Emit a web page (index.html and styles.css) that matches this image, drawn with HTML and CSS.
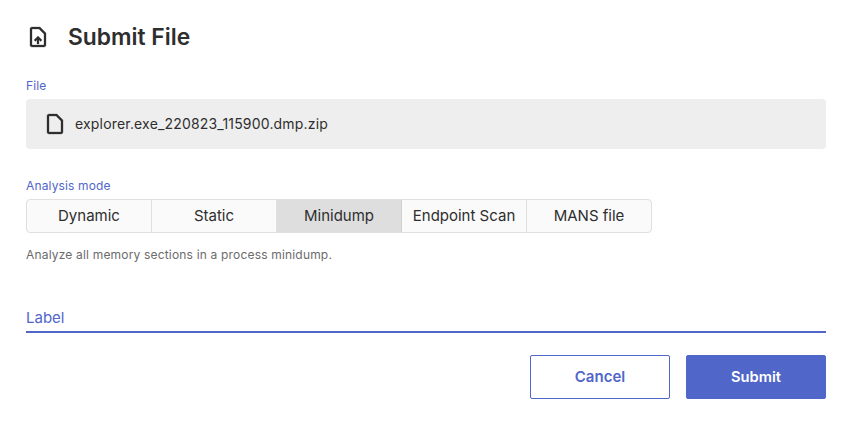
FILE: index.html
```html
<!DOCTYPE html>
<html lang="en">
<head>
<meta charset="utf-8">
<title>Submit File</title>
<link rel="stylesheet" href="styles.css">
</head>
<body>
<main class="dialog">
  <header class="title-row">
    <svg class="icon" viewBox="0 0 24 24"><path d="M14 2H6c-1.1 0-1.99.9-1.99 2L4 20c0 1.1.89 2 1.99 2H18c1.1 0 2-.9 2-2V8l-6-6zM6 20V4h7l5 5v11H6zM8 15.01l1.41 1.41L11 14.84V19h2v-4.16l1.59 1.59L16 15.01 12.01 11 8 15.01z"/></svg>
    <h1 class="title">Submit File</h1>
  </header>
  <section class="file-field">
    <div class="field-label">File</div>
    <div class="file-box">
      <svg class="icon" viewBox="0 0 24 24"><path d="M14 2H6c-1.1 0-1.99.9-1.99 2L4 20c0 1.1.89 2 1.99 2H18c1.1 0 2-.9 2-2V8l-6-6zM6 20V4h7l5 5v11H6z"/></svg>
      <span class="file-name">explorer.exe_220823_115900.dmp.zip</span>
    </div>
  </section>
  <section class="mode-field">
    <div class="field-label">Analysis mode</div>
    <div class="tabs">
      <div class="tab">Dynamic</div>
      <div class="tab">Static</div>
      <div class="tab active">Minidump</div>
      <div class="tab">Endpoint Scan</div>
      <div class="tab">MANS file</div>
    </div>
    <p class="help">Analyze all memory sections in a process minidump.</p>
  </section>
  <div class="label-input">Label</div>
  <footer class="actions">
    <button class="btn btn-outline">Cancel</button>
    <button class="btn btn-solid">Submit</button>
  </footer>
</main>
</body>
</html>
```
FILE: styles.css
```css
* { box-sizing: border-box; }
html, body { margin: 0; background: #fff; }
body { font-family: Inter, "Liberation Sans", sans-serif; color: #2e2e2e; }
.dialog { width: 847px; height: 425px; padding: 24px 21px 0 26px; }
.title-row { display: flex; align-items: center; gap: 18px; height: 26px; }
.icon { width: 24px; height: 24px; fill: #2e2e2e; stroke: #2e2e2e; stroke-width: 0.3; flex: none; }
.title { margin: 0; font-size: 22.8px; line-height: 26px; font-weight: 600; color: #2e2e2e; }
.file-field { margin-top: 28px; }
.field-label { font-size: 12px; line-height: 15px; letter-spacing: 0.15px; color: #5066c9; }
.file-box { display: flex; align-items: center; gap: 8px; height: 50px; margin-top: 6px; padding-left: 17px; background: #eeeeee; border-radius: 4px; }
.file-name { font-size: 14px; line-height: 16px; letter-spacing: 0.18px; color: #2e2e2e; padding-bottom: 1px; }
.mode-field { margin-top: 29px; }
.tabs { display: flex; width: 626px; height: 34px; margin-top: 6px; border: 1px solid #e0e0e0; border-radius: 4px; background: #fafafa; }
.tab { flex: 1; display: flex; align-items: center; justify-content: center; font-size: 15px; line-height: 18px; padding-bottom: 1px; color: #2e2e2e; border-right: 1px solid #e0e0e0; }
.tab:last-child { border-right: 0; }
.tab.active { background: #dedede; border-right-color: #cfcfcf; }
.help { margin: 14px 0 0; font-size: 12px; line-height: 15px; letter-spacing: 0.18px; color: #6b6b6b; }
.label-input { margin-top: 47px; height: 24px; font-size: 15px; line-height: 18px; color: #5066c9; border-bottom: 2px solid #5066c9; }
.actions { display: flex; justify-content: flex-end; gap: 16px; margin-top: 22px; }
.btn { width: 140px; height: 44px; border-radius: 2px; font-family: inherit; font-size: 15px; font-weight: 600; padding-bottom: 2px; border: 1px solid #5066c9; }
.btn-outline { background: #fff; color: #5066c9; }
.btn-solid { background: #5066c9; color: #fff; font-size: 14.7px; }
```
